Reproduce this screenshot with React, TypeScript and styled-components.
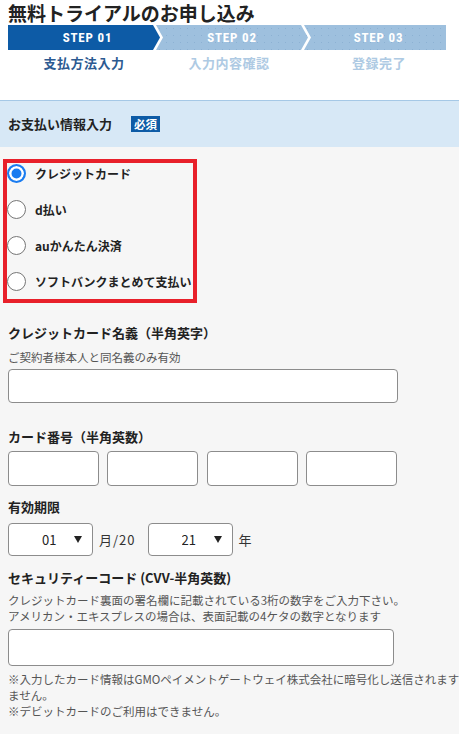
import React from "react";
import styled, { createGlobalStyle, css } from "styled-components";

const GlobalStyle = createGlobalStyle`
  html, body {
    margin: 0;
    padding: 0;
    background: #f6f6f6;
  }
  body {
    font-family: "Noto Sans CJK JP", "Noto Sans", sans-serif;
    color: #333;
    overflow-x: hidden;
  }
  * { box-sizing: border-box; }
`;

const Page = styled.div`
  width: 459px;
  min-height: 734px;
  background: #f6f6f6;
  overflow: hidden;
`;

const Header = styled.header`
  background: #fff;
  height: 100px;
  padding: 1px 13px 0 8px;
`;

const Title = styled.h1`
  margin: 0;
  font-size: 19px;
  line-height: 24px;
  font-weight: 700;
  color: #222;
`;

const StepBar = styled.div`
  display: flex;
`;

const StepCol = styled.div<{ $w: number; $first?: boolean }>`
  width: ${(p) => p.$w}px;
  margin-left: ${(p) => (p.$first ? 0 : -4)}px;
  display: flex;
  flex-direction: column;
`;

const Segment = styled.div<{ $active?: boolean; $pos: "first" | "mid" | "last"; $pad: number }>`
  height: 25px;
  display: flex;
  align-items: center;
  justify-content: center;
  padding-left: ${(p) => p.$pad}px;
  font-family: "Liberation Sans Narrow", "Roboto Condensed", "Roboto", sans-serif;
  font-weight: 700;
  font-size: 13px;
  letter-spacing: 0.8px;
  color: #fff;
  ${(p) =>
    p.$active
      ? css`
          background: #0d5ba6;
        `
      : css`
          background-color: #9ec0de;
          background-image: radial-gradient(circle, rgba(80, 125, 175, 0.22) 0.5px, transparent 0.8px);
          background-size: 7px 7px;
        `}
  clip-path: ${(p) =>
    p.$pos === "first"
      ? "polygon(0 0, calc(100% - 7px) 0, 100% 50%, calc(100% - 7px) 100%, 0 100%)"
      : p.$pos === "mid"
      ? "polygon(0 0, calc(100% - 7px) 0, 100% 50%, calc(100% - 7px) 100%, 0 100%, 7px 50%)"
      : "polygon(0 0, 100% 0, 100% 100%, 0 100%, 7px 50%)"};
`;

const StepLabel = styled.div<{ $active?: boolean; $pad: number }>`
  margin-top: 3px;
  line-height: 20px;
  font-size: 13px;
  font-weight: 700;
  text-align: center;
  padding-left: ${(p) => Math.max(p.$pad, 0)}px;
  padding-right: ${(p) => Math.max(-p.$pad, 0)}px;
  letter-spacing: 0.5px;
  color: ${(p) => (p.$active ? "#2c5a91" : "#aecae3")};
`;

const Band = styled.div`
  height: 47px;
  border-top: 1px solid #a5c8e6;
  background: #d7e8f6;
  display: flex;
  align-items: center;
  padding-left: 8px;
`;

const BandTitle = styled.h2`
  margin: 0;
  font-size: 13px;
  line-height: 20px;
  font-weight: 700;
  color: #222;
`;

const Badge = styled.span`
  margin-left: 19px;
  height: 16px;
  padding: 0 3px;
  display: inline-flex;
  align-items: center;
  background: #0d5ba6;
  color: #fff;
  font-size: 11.5px;
  font-weight: 700;
`;

const Form = styled.form`
  padding: 12px 0 20px;
`;

const RadioBox = styled.div`
  margin-left: 3px;
  width: 194px;
  border: 4px solid #e8202a;
  padding: 1px 0 8px;
  display: flex;
  flex-direction: column;
  gap: 17px;
`;

const RadioRow = styled.label`
  display: flex;
  align-items: center;
  height: 19px;
  gap: 9px;
  font-size: 12px;
  font-weight: 700;
  color: #222;
  white-space: nowrap;
`;

const RadioMark = styled.input`
  appearance: none;
  margin: 0;
  width: 19px;
  height: 19px;
  flex: none;
  border-radius: 50%;
  border: 1px solid #767676;
  background: #fff;
  &:checked {
    border: 2px solid #1a7cf0;
    background: #1a7cf0;
    box-shadow: inset 0 0 0 2.5px #fff;
  }
`;

const Fields = styled.div`
  padding: 0 8px;
`;

const FieldLabel = styled.div<{ $mt: number }>`
  margin-top: ${(p) => p.$mt}px;
  font-size: 13px;
  line-height: 20px;
  font-weight: 700;
  color: #222;
  white-space: nowrap;
`;

const Hint = styled.div<{ $mt: number }>`
  margin-top: ${(p) => p.$mt}px;
  font-size: 11.5px;
  line-height: 16px;
  color: #555;
  white-space: nowrap;
`;

const TextInput = styled.input<{ $w: number; $h: number; $mt: number }>`
  display: block;
  margin-top: ${(p) => p.$mt}px;
  width: ${(p) => p.$w}px;
  height: ${(p) => p.$h}px;
  border: 1px solid #8c8c8c;
  border-radius: 4px;
  background: #fff;
  font: inherit;
  padding: 0 8px;
`;

const CardGrid = styled.div`
  margin-top: 4px;
  display: grid;
  grid-template-columns: repeat(4, 91px);
  column-gap: 8.3px;
`;

const CardInput = styled.input`
  height: 35px;
  border: 1px solid #8c8c8c;
  border-radius: 4px;
  background: #fff;
  font: inherit;
  padding: 0 6px;
`;

const ExpiryRow = styled.div`
  margin-top: 6px;
  display: flex;
  align-items: center;
`;

const SelectWrap = styled.div`
  position: relative;
  width: 85px;
  height: 33px;
  &::after {
    content: "";
    position: absolute;
    right: 11px;
    top: 13px;
    border-left: 4px solid transparent;
    border-right: 4px solid transparent;
    border-top: 7px solid #222;
    pointer-events: none;
  }
`;

const Select = styled.select`
  appearance: none;
  width: 100%;
  height: 100%;
  border: 1px solid #8c8c8c;
  border-radius: 4px;
  background: #fff;
  padding: 0 0 0 33px;
  font-family: "Noto Sans CJK JP", sans-serif;
  font-size: 13px;
  color: #222;
`;

const Unit = styled.span<{ $mr: number }>`
  margin: 0 ${(p) => p.$mr}px 0 6px;
  font-size: 13px;
  letter-spacing: 1px;
  color: #333;
`;

const Note = styled.div`
  font-size: 11.5px;
  line-height: 16px;
  color: #555;
  white-space: nowrap;
`;

const NoteBlock = styled.div`
  margin-top: 5px;
`;

const steps = [
  { en: "STEP 01", ja: "支払方法入力", w: 152, pos: "first" as const, active: true, pad: 7, lpad: 0 },
  { en: "STEP 02", ja: "入力内容確認", w: 152, pos: "mid" as const, active: false, pad: 0, lpad: -6 },
  { en: "STEP 03", ja: "登録完了", w: 142, pos: "last" as const, active: false, pad: 7, lpad: 8 },
];

const methods = ["クレジットカード", "d払い", "auかんたん決済", "ソフトバンクまとめて支払い"];

const months = Array.from({ length: 12 }, (_, i) => String(i + 1).padStart(2, "0"));
const years = Array.from({ length: 10 }, (_, i) => String(21 + i));

export default function App() {
  return (
    <Page>
      <GlobalStyle />
      <Header>
        <Title>無料トライアルのお申し込み</Title>
        <StepBar>
          {steps.map((s, i) => (
            <StepCol key={s.en} $w={s.w} $first={i === 0}>
              <Segment $active={s.active} $pos={s.pos} $pad={s.pad}>
                {s.en}
              </Segment>
              <StepLabel $active={s.active} $pad={s.lpad}>
                {s.ja}
              </StepLabel>
            </StepCol>
          ))}
        </StepBar>
      </Header>
      <Band>
        <BandTitle>お支払い情報入力</BandTitle>
        <Badge>必須</Badge>
      </Band>
      <Form onSubmit={(e) => e.preventDefault()}>
        <RadioBox>
          {methods.map((m, i) => (
            <RadioRow key={m}>
              <RadioMark type="radio" name="method" defaultChecked={i === 0} />
              {m}
            </RadioRow>
          ))}
        </RadioBox>
        <Fields>
          <FieldLabel $mt={20}>クレジットカード名義（半角英字）</FieldLabel>
          <Hint $mt={6}>ご契約者様本人と同名義のみ有効</Hint>
          <TextInput $w={390} $h={34} $mt={4} />

          <FieldLabel $mt={24}>カード番号（半角英数）</FieldLabel>
          <CardGrid>
            <CardInput />
            <CardInput />
            <CardInput />
            <CardInput />
          </CardGrid>

          <FieldLabel $mt={11}>有効期限</FieldLabel>
          <ExpiryRow>
            <SelectWrap>
              <Select defaultValue="01">
                {months.map((m) => (
                  <option key={m} value={m}>
                    {m}
                  </option>
                ))}
              </Select>
            </SelectWrap>
            <Unit $mr={12}>月/20</Unit>
            <SelectWrap>
              <Select defaultValue="21">
                {years.map((y) => (
                  <option key={y} value={y}>
                    {y}
                  </option>
                ))}
              </Select>
            </SelectWrap>
            <Unit $mr={0}>年</Unit>
          </ExpiryRow>

          <FieldLabel $mt={12}>セキュリティーコード (CVV-半角英数)</FieldLabel>
          <Hint $mt={4}>クレジットカード裏面の署名欄に記載されている3桁の数字をご入力下さい。</Hint>
          <Hint $mt={0}>アメリカン・エキスプレスの場合は、表面記載の4ケタの数字となります</Hint>
          <TextInput $w={386} $h={37} $mt={5} />

          <NoteBlock>
            <Note>※入力したカード情報はGMOペイメントゲートウェイ株式会社に暗号化し送信されます</Note>
            <Note>ません。</Note>
            <Note>※デビットカードのご利用はできません。</Note>
          </NoteBlock>
        </Fields>
      </Form>
    </Page>
  );
}
